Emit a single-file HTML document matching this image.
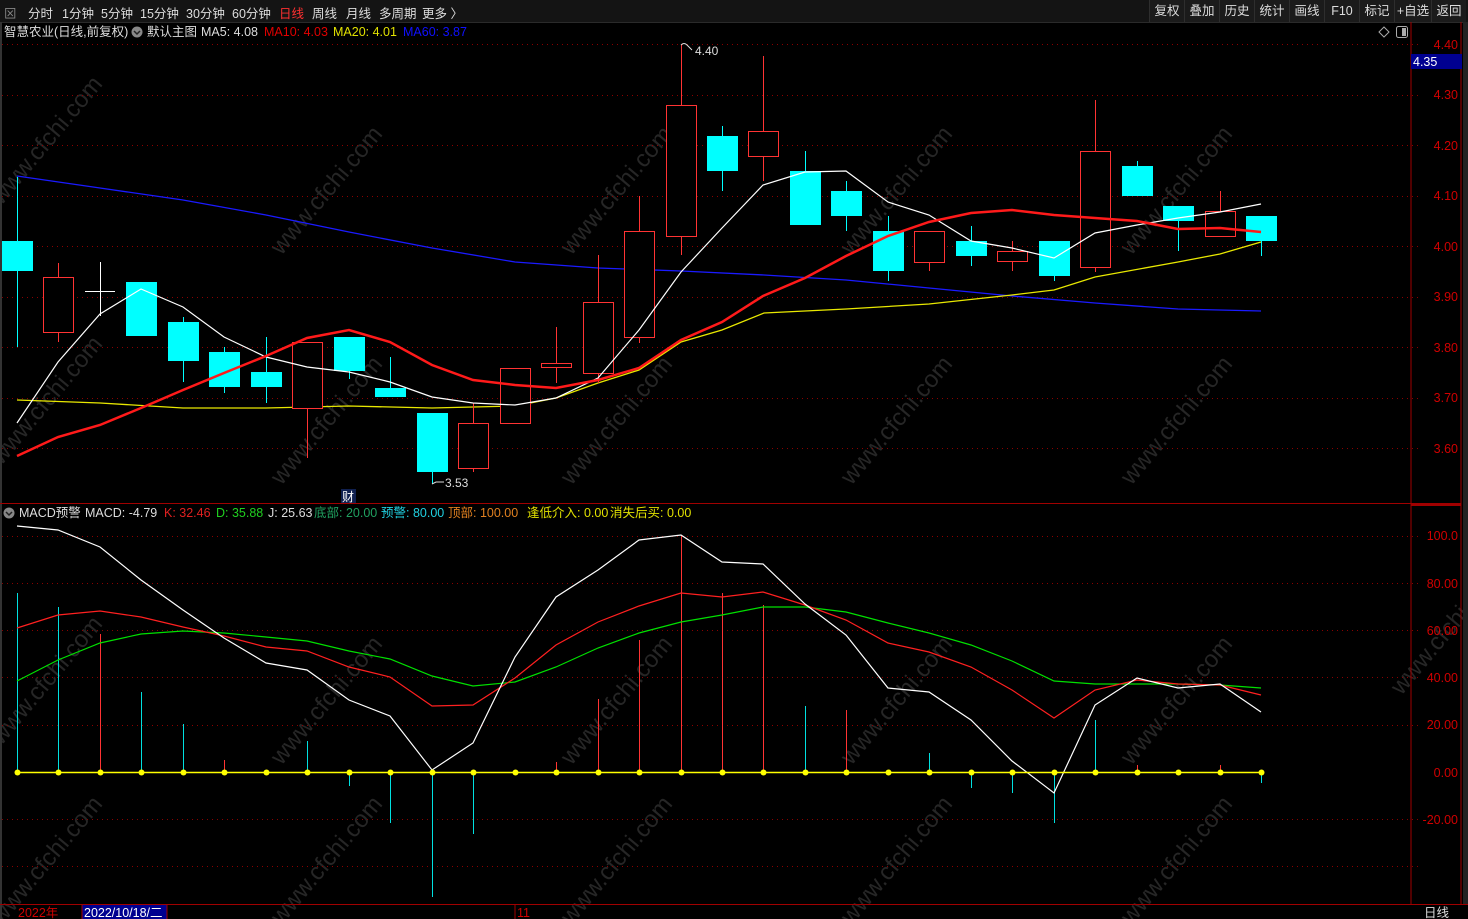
<!DOCTYPE html>
<html><head><meta charset="utf-8">
<style>
html,body{margin:0;padding:0;background:#000;width:1468px;height:919px;overflow:hidden;font-family:"Liberation Sans","Noto Sans CJK SC",sans-serif;font-size:12px}
#top{position:absolute;left:0;top:0;width:1468px;height:22px;background:#141414;border-bottom:1px solid #2a2a2a}
#top span{position:absolute;top:3px;color:#ddd;font-size:12.5px}
.btn{position:absolute;top:0;height:22px;line-height:22px;color:#ddd;font-size:12.5px;border-left:1px solid #2e2e2e;text-align:center;background:#1b1b1b}
svg{position:absolute;left:0;top:0}
</style></head><body>
<div id="top">
<span style="left:4px;color:#888">⊠</span>
<span style="left:28px">分时</span><span style="left:62px">1分钟</span><span style="left:101px">5分钟</span><span style="left:140px">15分钟</span><span style="left:186px">30分钟</span><span style="left:232px">60分钟</span><span style="left:279px;color:#ff3030">日线</span><span style="left:312px">周线</span><span style="left:346px">月线</span><span style="left:379px">多周期</span><span style="left:422px">更多 〉</span>
<div class="btn" style="left:1149px;width:34px">复权</div><div class="btn" style="left:1184px;width:34px">叠加</div><div class="btn" style="left:1219px;width:34px">历史</div><div class="btn" style="left:1254px;width:34px">统计</div><div class="btn" style="left:1289px;width:34px">画线</div><div class="btn" style="left:1324px;width:34px">F10</div><div class="btn" style="left:1359px;width:34px">标记</div><div class="btn" style="left:1394px;width:36px">+自选</div><div class="btn" style="left:1431px;width:34px">返回</div>
</div>
<svg id="s" width="1468" height="919" viewBox="0 0 1468 919" style="top:0">
<g fill="#262626" font-size="24" font-family="Liberation Sans,sans-serif" id="wm"></g>
<g id="grid" stroke="#8b0000" stroke-dasharray="1,4" stroke-width="1"></g>
<line x1="1" y1="22" x2="1" y2="919" stroke="#333" stroke-width="2"/>
<line x1="1411" y1="22" x2="1411" y2="904" stroke="#a00000"/>
<line x1="1461" y1="22" x2="1461" y2="904" stroke="#a00000"/>
<line x1="0" y1="503.5" x2="1461" y2="503.5" stroke="#a00000"/>
<line x1="0" y1="904.5" x2="1468" y2="904.5" stroke="#a00000"/>
<line x1="1411" y1="505" x2="1461" y2="505" stroke="#a00000" stroke-width="2"/>
<rect x="1463" y="22" width="5" height="882" fill="#222"/>
<g id="ch"></g>
<g id="low"></g>
<text x="4" y="36" fill="#ddd" font-size="12.5">智慧农业(日线,前复权)</text>
<circle cx="137" cy="32" r="5.5" fill="#888"/><path d="M134 31l3 3 3-3" stroke="#222" fill="none" stroke-width="1.5"/>
<text x="147" y="36" fill="#ddd" font-size="12.5">默认主图</text>
<text x="201" y="36" fill="#ddd" font-size="12.5">MA5: 4.08</text>
<text x="264" y="36" fill="#e00000" font-size="12.5">MA10: 4.03</text>
<text x="333" y="36" fill="#e0e000" font-size="12.5">MA20: 4.01</text>
<text x="403" y="36" fill="#1010ff" font-size="12.5">MA60: 3.87</text>
<path d="M1384 27l5 5-5 5-5-5z" stroke="#aaa" fill="none"/>
<rect x="1396.5" y="26.5" width="11" height="11" rx="2" stroke="#aaa" fill="none"/><rect x="1402" y="28" width="4" height="8" fill="#aaa"/>
<circle cx="9" cy="513" r="5.5" fill="#888"/><path d="M6 512l3 3 3-3" stroke="#222" fill="none" stroke-width="1.5"/>
<g font-size="12.5">
<text x="19" y="517" fill="#ddd">MACD预警</text>
<text x="85" y="517" fill="#ddd">MACD: -4.79</text>
<text x="164" y="517" fill="#e02020">K: 32.46</text>
<text x="216" y="517" fill="#20d020">D: 35.88</text>
<text x="268" y="517" fill="#ddd">J: 25.63</text>
<text x="314" y="517" fill="#20a060">底部: 20.00</text>
<text x="381" y="517" fill="#20d0e0">预警: 80.00</text>
<text x="448" y="517" fill="#e08020">顶部: 100.00</text>
<text x="527" y="517" fill="#e0e000">逢低介入: 0.00</text>
<text x="610" y="517" fill="#e0e000">消失后买: 0.00</text>
</g>
<g fill="#d00000" font-size="12.5" text-anchor="end">
<text x="1458" y="49">4.40</text><text x="1458" y="99">4.30</text><text x="1458" y="150">4.20</text><text x="1458" y="200">4.10</text><text x="1458" y="251">4.00</text><text x="1458" y="301">3.90</text><text x="1458" y="352">3.80</text><text x="1458" y="402">3.70</text><text x="1458" y="453">3.60</text>
<text x="1458" y="540">100.0</text><text x="1458" y="588">80.00</text><text x="1458" y="635">60.00</text><text x="1458" y="682">40.00</text><text x="1458" y="729">20.00</text><text x="1458" y="777">0.00</text><text x="1458" y="824">-20.00</text>
</g>
<rect x="1411" y="54" width="51" height="15" fill="#000090"/>
<text x="1413" y="66" fill="#fff" font-size="12.5">4.35</text>
<text x="18" y="917" fill="#d00000" font-size="12.5">2022年</text>
<rect x="82" y="905" width="85" height="14" fill="#000090"/><line x1="82" y1="905" x2="82" y2="919" stroke="#a00000"/><line x1="167" y1="905" x2="167" y2="919" stroke="#a00000"/>
<text x="84" y="917" fill="#fff" font-size="12.5">2022/10/18/二</text>
<line x1="515" y1="905" x2="515" y2="919" stroke="#a00000"/><text x="517" y="917" fill="#d00000" font-size="12.5">11</text>
<text x="1424" y="917" fill="#ddd" font-size="12.5">日线</text>
<path d="M681 45q3-3 6 0l5 5" stroke="#ddd" fill="none"/><text x="695" y="55" fill="#ddd" font-size="12">4.40</text>
<path d="M432 484l4-2h8" stroke="#ddd" fill="none"/><text x="445" y="487" fill="#ddd" font-size="12">3.53</text>
<rect x="341" y="489" width="15" height="14" fill="#102050"/><text x="342" y="501" fill="#fff" font-size="12">财</text>
</svg>
<script>
const NS="http://www.w3.org/2000/svg";
function el(p,t,a){const e=document.createElementNS(NS,t);for(const k in a)e.setAttribute(k,a[k]);p.appendChild(e);return e;}
const wm=document.getElementById('wm');
[[40,160],[320,210],[610,210],[890,210],[1170,210],[40,420],[320,440],[610,440],[890,440],[1170,440],[40,700],[320,720],[610,720],[890,720],[1170,720],[40,880],[320,880],[610,880],[890,880],[1170,880],[1440,650]].forEach(p=>{const t=el(wm,'text',{x:p[0]-60,y:p[1],transform:`rotate(-50 ${p[0]} ${p[1]})`});t.textContent='www.cfchi.com';});
const g=document.getElementById('grid');
[44,95,145,196,246,297,347,398,448,536,583,630,677,725,819,866].forEach(y=>el(g,'line',{x1:2,y1:y+.5,x2:1418,y2:y+.5}));
const xs=[];for(let i=0;i<31;i++)xs.push(Math.round(17+i*41.47));
const C=[[241,271,177,347,'c'],[277,332,263,342,'r'],[291,292,262,316,'w'],[282,336,282,336,'c'],[322,361,317,382,'c'],[352,387,347,393,'c'],[372,387,337,403,'c'],[342,408,342,458,'r'],[337,371,337,379,'c'],[388,397,357,397,'c'],[413,472,413,484,'c'],[423,468,403,472,'r'],[368,423,368,423,'r'],[363,367,327,383,'r'],[302,373,255,383,'r'],[231,337,196,343,'r'],[105,236,45,255,'r'],[136,171,126,191,'c'],[131,156,56,181,'r'],[171,225,151,225,'c'],[191,216,181,231,'c'],[231,271,216,281,'c'],[231,262,231,271,'r'],[241,256,226,266,'c'],[251,261,241,271,'r'],[241,276,241,281,'c'],[151,267,100,272,'r'],[166,196,161,196,'c'],[206,221,206,251,'c'],[211,236,191,236,'r'],[216,241,216,256,'c']];
const ch=document.getElementById('ch');
function line(pts,col,w){el(ch,'polyline',{points:pts.map(p=>p.join(',')).join(' '),stroke:col,'stroke-width':w,fill:'none'});}
line([[17,176],[100,188],[183,200],[266,215],[349,232],[432,248],[515,262],[598,268],[681,271],[764,275],[846,280],[929,288],[1012,296],[1095,303],[1178,309],[1261,311]],'#1a1aff',1.3);
line([[17,400],[100,403],[183,408],[266,408],[349,406],[432,408],[515,406],[556,398],[598,383],[639,370],[681,342],[722,330],[764,313],[846,309],[929,304],[1012,295],[1054,290],[1095,277],[1178,262],[1220,254],[1261,242]],'#e8e800',1.3);
C.forEach((c,i)=>{const x=xs[i];const col=c[4]=='c'?'#00ffff':c[4]=='r'?'#ff3333':'#fff';
el(ch,'line',{x1:x+.5,y1:c[2],x2:x+.5,y2:c[3],stroke:col});
if(c[4]=='c')el(ch,'rect',{x:x-15,y:c[0],width:31,height:c[1]-c[0],fill:col});
else if(c[4]=='r')el(ch,'rect',{x:x-14.5,y:c[0]+.5,width:30,height:c[1]-c[0],fill:'#000',stroke:col});
else el(ch,'line',{x1:x-15,y1:c[0]+.5,x2:x+15,y2:c[0]+.5,stroke:col});});
const ma5=[423,362,314,289,307,337,357,367,372,382,397,403,405,398,378,330,272,228,185,172,171,202,215,241,248,258,233,225,218,212,204];
line(ma5.map((y,i)=>[xs[i],y]),'#fff',1.2);
const ma10=[456,437,425,408,390,373,356,338,330,342,365,380,385,388,380,368,340,322,296,278,256,236,222,213,210,215,218,221,229,228,232];
line(ma10.map((y,i)=>[xs[i],y]),'#ff1a1a',2.5);
const low=document.getElementById('low');
const bars=[[593,'c'],[607,'c'],[634,'r'],[692,'c'],[724,'c'],[760,'r'],[772,'c'],[741,'c'],[786,'c'],[823,'c'],[897,'c'],[834,'c'],[772,'c'],[762,'r'],[699,'r'],[640,'r'],[535,'r'],[593,'r'],[605,'r'],[706,'c'],[710,'r'],[772,'c'],[753,'c'],[788,'c'],[793,'c'],[823,'c'],[720,'c'],[765,'r'],[772,'c'],[765,'r'],[783,'c']];
bars.forEach((b,i)=>el(low,'line',{x1:xs[i]+.5,y1:772,x2:xs[i]+.5,y2:b[0],stroke:b[1]=='c'?'#00e0e0':'#ff3333'}));
function ln(arr,col){el(low,'polyline',{points:arr.map((y,i)=>xs[i]+','+y).join(' '),stroke:col,'stroke-width':1.2,fill:'none'});}
ln([681,660,643,634,631,633,637,641,651,659,676,686,682,667,648,633,622,615,607,607,612,623,633,645,661,681,684,684,684,685,688],'#00e000');
ln([628,615,611,617,627,636,647,651,667,677,706,705,678,645,622,606,593,597,592,605,620,643,652,667,690,718,690,680,684,685,695],'#ff2020');
ln([526,530,547,580,610,638,663,670,700,716,770,743,657,597,570,540,535,562,564,604,635,688,692,720,761,793,705,678,688,684,712],'#fff');
el(low,'line',{x1:17,y1:772.5,x2:1261,y2:772.5,stroke:'#ffff00','stroke-width':1.5});
xs.forEach(x=>el(low,'circle',{cx:x+.5,cy:772.5,r:3,fill:'#ffff00'}));
</script>
</body></html>
